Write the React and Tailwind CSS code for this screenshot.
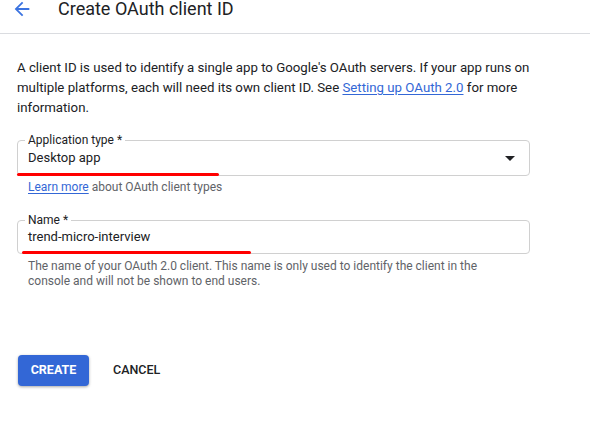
function ArrowBack() {
  return (
    <svg viewBox="0 0 24 24" className="h-[22px] w-[22px] fill-[#3b73e0]">
      <path d="M20 11H7.83l5.59-5.59L12 4l-8 8 8 8 1.41-1.41L7.83 13H20v-2z" />
    </svg>
  );
}

function OutlinedField({ label, value, height, select, markWidth, markLeft }) {
  return (
    <div
      className={`relative flex items-center rounded-[4px] border border-[#d0d0d0] pl-[10px] pr-[14px] ${height}`}
    >
      <span className="absolute left-[7px] top-[-9px] bg-white px-[3px] text-[12px] leading-[16px] text-[#202124]">
        {label} *
      </span>
      <span className="flex-1 text-[13px] text-[#202124]">{value}</span>
      {select && (
        <svg viewBox="0 0 10 5" className="h-[5px] w-[10px] fill-[#202124]">
          <path d="M0 0h10L5 5z" />
        </svg>
      )}
      <div
        className={`absolute bottom-[-1px] h-[3px] rounded-full bg-[#ff0000] ${markLeft} ${markWidth}`}
      />
    </div>
  );
}

export default function App() {
  return (
    <div className="h-[435px] w-[590px] overflow-hidden bg-white font-['Roboto',sans-serif] text-[#202124]">
      <header className="flex h-[34px] border-b border-[#dadce0] pb-[15px]">
        <div className="flex h-[18px] items-center">
          <div className="ml-[11px] flex w-[47px] items-center">
            <ArrowBack />
          </div>
          <h1 className="text-[18px] font-normal leading-none">Create OAuth client ID</h1>
        </div>
      </header>

      <div className="w-[540px] pl-[17px]">
        <p className="mt-[24px] text-[13.25px] leading-[20px]">
          A client ID is used to identify a single app to Google's OAuth servers. If your app runs on
          <br />
          multiple platforms, each will need its own client ID. See{" "}
          <span className="text-[#3367d6] underline underline-offset-2">Setting up OAuth 2.0</span> for
          more
          <br />
          information.
        </p>

        <div className="mt-[22px] w-[513px]">
          <OutlinedField
            label="Application type"
            value="Desktop app"
            height="h-[36px]"
            select
            markLeft="left-[-1px]"
            markWidth="w-[202px]"
          />
        </div>
        <p className="mt-[3px] pl-[11px] text-[12px] leading-[16px] text-[#5f6368]">
          <span className="text-[#3367d6] underline underline-offset-2">Learn more</span> about OAuth
          client types
        </p>

        <div className="mt-[25px] w-[513px]">
          <OutlinedField
            label="Name"
            value="trend-micro-interview"
            height="h-[34px]"
            markLeft="left-[4px]"
            markWidth="w-[229px]"
          />
        </div>
        <p className="mt-[5px] pl-[11px] text-[12px] leading-[15px] text-[#5f6368]">
          The name of your OAuth 2.0 client. This name is only used to identify the client in the
          <br />
          console and will not be shown to end users.
        </p>

        <div className="mt-[66px] flex items-center">
          <button className="ml-[1px] h-[31px] w-[71px] rounded-[4px] bg-[#3367d6] text-[12.5px] font-bold text-white shadow-[0_1px_3px_rgba(0,0,0,0.35)]">
            CREATE
          </button>
          <button className="ml-[24px] text-[12.5px] font-medium text-[#202124]">CANCEL</button>
        </div>
      </div>
    </div>
  );
}
